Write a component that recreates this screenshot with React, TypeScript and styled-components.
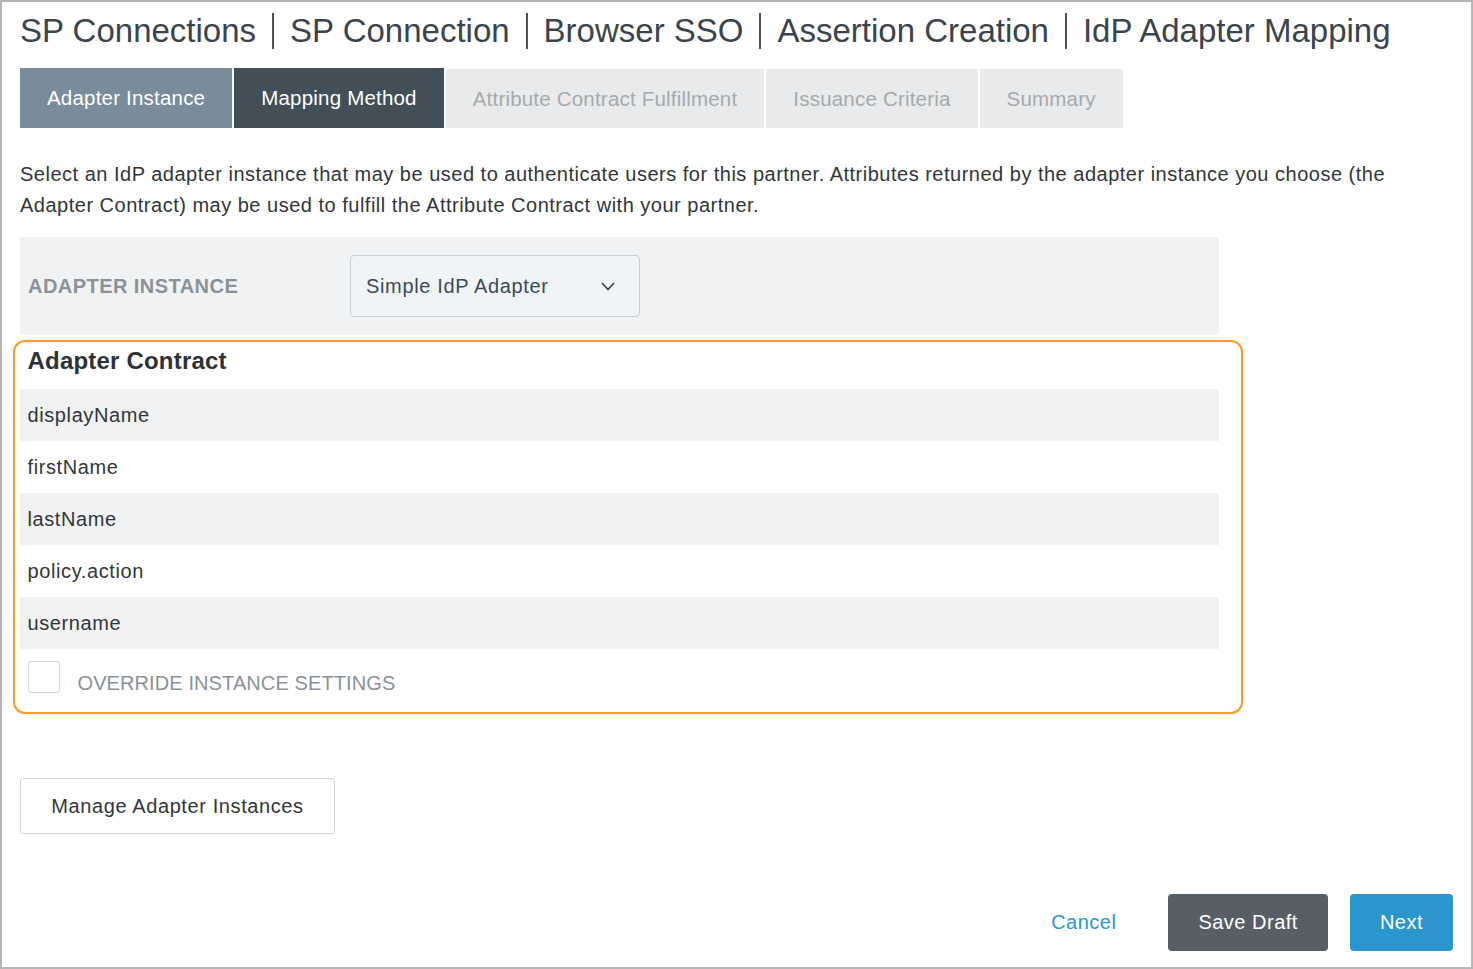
import styled, { createGlobalStyle } from 'styled-components';

const GlobalStyle = createGlobalStyle`
	html, body {
		margin: 0;
		padding: 0;
		background: #fff;
	}
	body {
		font-family: 'Liberation Sans', Arial, sans-serif;
		color: #333a40;
		letter-spacing: 0.5px;
	}
	* {
		box-sizing: border-box;
	}
`;

const Frame = styled.div`
	width: 1473px;
	height: 969px;
	border: 2px solid #b5b5b5;
	padding: 0 18px;
	display: flex;
	flex-direction: column;
`;

const Breadcrumb = styled.h1`
	margin: 9px 0 0;
	height: 40px;
	display: flex;
	align-items: center;
	font-size: 33px;
	font-weight: 400;
	letter-spacing: 0;
	color: #3a444d;
	white-space: nowrap;
`;

const Divider = styled.span`
	display: inline-block;
	width: 2px;
	height: 36px;
	margin: 0 16px;
	background: #4a535b;
`;

const TabBar = styled.div`
	margin-top: 17px;
	display: flex;
	gap: 2px;
	height: 60px;
	align-items: flex-end;
`;

type TabState = 'done' | 'current' | 'todo';

const tabBg: Record<TabState, string> = {
	done: '#7a8b9c',
	current: '#424f59',
	todo: '#e9eaeb',
};

const Tab = styled.div<{ $state: TabState }>`
	height: ${(p) => (p.$state === 'todo' ? '59px' : '60px')};
	padding: 0 27px;
	display: flex;
	align-items: center;
	font-size: 20.5px;
	letter-spacing: 0.2px;
	background: ${(p) => tabBg[p.$state]};
	color: ${(p) => (p.$state === 'todo' ? '#a5aaae' : '#fff')};
	white-space: nowrap;
`;

const Intro = styled.p`
	margin: 31px 0 0;
	font-size: 20px;
	line-height: 31px;
	color: #30363b;
`;

const InstancePanel = styled.div`
	margin-top: 16px;
	width: 1199px;
	height: 98px;
	background: #f1f2f4;
	padding: 0 8px;
	display: flex;
	align-items: center;
`;

const FieldLabel = styled.label`
	width: 322px;
	font-size: 20px;
	font-weight: 700;
	letter-spacing: 0.45px;
	color: #8a9299;
	text-transform: uppercase;
`;

const SelectBox = styled.div`
	width: 290px;
	height: 62px;
	border: 1px solid #c9ced3;
	border-radius: 4px;
	background: #f0f4f7;
	padding: 0 24px 0 15px;
	display: flex;
	align-items: center;
	justify-content: space-between;
	font-size: 20px;
	letter-spacing: 0.65px;
	color: #3c4a58;
`;

const Highlight = styled.section`
	margin: 5px 0 0 -7px;
	width: 1230px;
	border: 2.5px solid #ff9b21;
	border-radius: 12px;
	padding: 0 22px 17px 4.5px;
`;

const SectionTitle = styled.h2`
	margin: 1px 0 10px 8px;
	font-size: 24px;
	line-height: 36px;
	font-weight: 700;
	letter-spacing: 0.2px;
	color: #2d3236;
`;

const ContractRow = styled.div<{ $shaded: boolean }>`
	height: 52px;
	padding-left: 8px;
	display: flex;
	align-items: center;
	font-size: 20px;
	letter-spacing: 0.6px;
	color: #30363b;
	background: ${(p) => (p.$shaded ? '#f1f2f4' : 'transparent')};
`;

const CheckRow = styled.div`
	margin-top: 12px;
	padding-left: 8px;
	display: flex;
	align-items: flex-start;
	gap: 18px;
`;

const CheckBox = styled.span`
	width: 32px;
	height: 32px;
	border: 1px solid #cfd3d6;
	border-radius: 3px;
	background: #fff;
`;

const CheckLabel = styled.span`
	margin-top: 10px;
	font-size: 20px;
	line-height: 24px;
	letter-spacing: 0.1px;
	color: #8a9299;
	text-transform: uppercase;
`;

const SecondaryButton = styled.button`
	margin-top: 64px;
	align-self: flex-start;
	width: 315px;
	height: 56px;
	border: 1px solid #cfd3d6;
	border-radius: 3px;
	background: #fff;
	font-family: inherit;
	font-size: 20px;
	letter-spacing: 0.6px;
	color: #30363b;
`;

const Footer = styled.div`
	margin-top: 60px;
	display: flex;
	justify-content: flex-end;
	align-items: center;
`;

const LinkButton = styled.a`
	margin-right: 52px;
	font-size: 20px;
	color: #2a96d2;
	text-decoration: none;
`;

const ActionButton = styled.button<{ $primary?: boolean }>`
	height: 57px;
	padding: 0 30px;
	margin-left: ${(p) => (p.$primary ? '22px' : '0')};
	border: none;
	border-radius: 4px;
	background: ${(p) => (p.$primary ? '#2b96cd' : '#575f66')};
	color: #fff;
	font-family: inherit;
	font-size: 20px;
	letter-spacing: 0.5px;
`;

const Chevron = () => (
	<svg width="14" height="9" viewBox="0 0 14 9" fill="none">
		<polyline points="1,1 7,7.5 13,1" stroke="#3c4a58" strokeWidth="1.8" />
	</svg>
);

const crumbs = ['SP Connections', 'SP Connection', 'Browser SSO', 'Assertion Creation', 'IdP Adapter Mapping'];

const tabs: { label: string; state: TabState }[] = [
	{ label: 'Adapter Instance', state: 'done' },
	{ label: 'Mapping Method', state: 'current' },
	{ label: 'Attribute Contract Fulfillment', state: 'todo' },
	{ label: 'Issuance Criteria', state: 'todo' },
	{ label: 'Summary', state: 'todo' },
];

const attributes = ['displayName', 'firstName', 'lastName', 'policy.action', 'username'];

export default function App() {
	return (
		<>
			<GlobalStyle />
			<Frame>
				<Breadcrumb>
					{crumbs.map((c, i) => (
						<span key={c} style={{ display: 'contents' }}>
							{i > 0 && <Divider />}
							{c}
						</span>
					))}
				</Breadcrumb>

				<TabBar>
					{tabs.map((t) => (
						<Tab key={t.label} $state={t.state}>
							{t.label}
						</Tab>
					))}
				</TabBar>

				<Intro>
					Select an IdP adapter instance that may be used to authenticate users for this partner. Attributes returned by the
					adapter instance you choose (the Adapter Contract) may be used to fulfill the Attribute Contract with your partner.
				</Intro>

				<InstancePanel>
					<FieldLabel>Adapter Instance</FieldLabel>
					<SelectBox>
						Simple IdP Adapter
						<Chevron />
					</SelectBox>
				</InstancePanel>

				<Highlight>
					<SectionTitle>Adapter Contract</SectionTitle>
					{attributes.map((a, i) => (
						<ContractRow key={a} $shaded={i % 2 === 0}>
							{a}
						</ContractRow>
					))}
					<CheckRow>
						<CheckBox />
						<CheckLabel>Override Instance Settings</CheckLabel>
					</CheckRow>
				</Highlight>

				<SecondaryButton>Manage Adapter Instances</SecondaryButton>

				<Footer>
					<LinkButton href="#">Cancel</LinkButton>
					<ActionButton>Save Draft</ActionButton>
					<ActionButton $primary>Next</ActionButton>
				</Footer>
			</Frame>
		</>
	);
}
